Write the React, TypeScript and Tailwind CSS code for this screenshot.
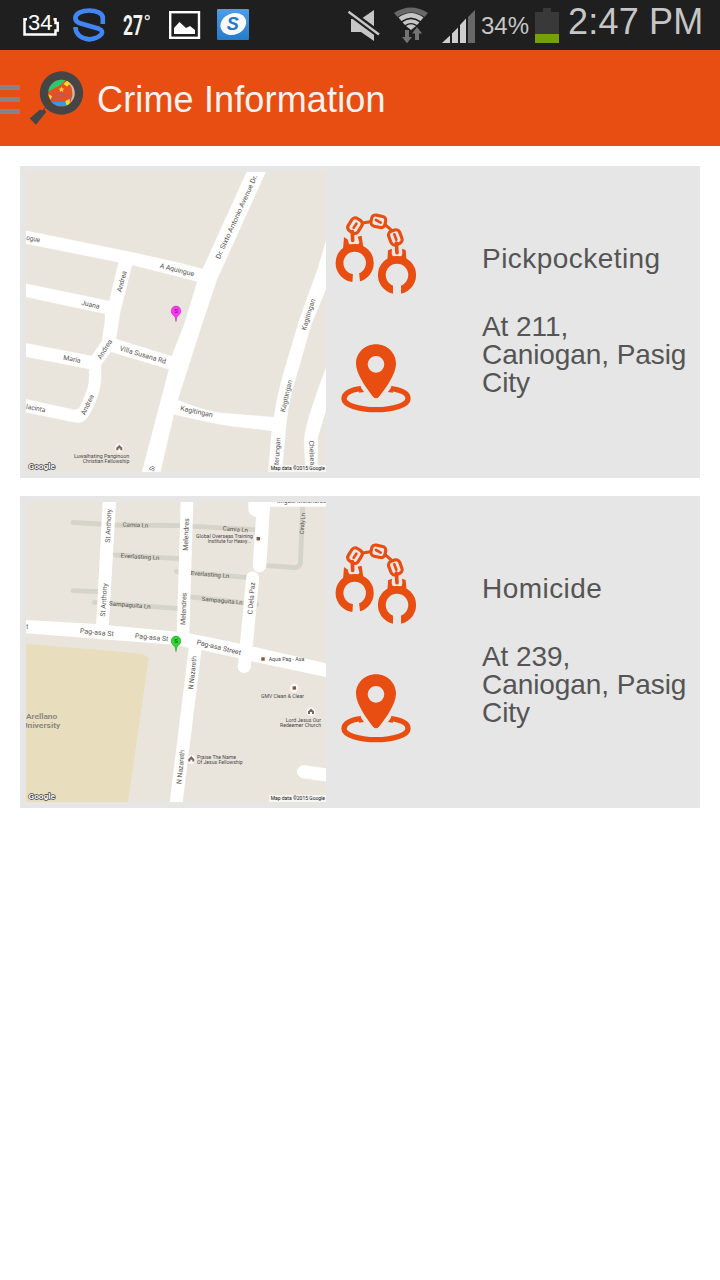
import React from "react";

type Line = [string, number, number, number, number];

function Labels({
  items,
  size = 6.9,
  fill = "#5a5552",
  weight = 400,
}: {
  items: Line[];
  size?: number;
  fill?: string;
  weight?: number;
}) {
  return (
    <g fontFamily="Roboto, sans-serif" fontSize={size} fontWeight={weight} fill={fill}>
      {items.map(([t, x1, y1, x2, y2], i) => {
        const len = Math.hypot(x2 - x1, y2 - y1);
        const angle = (Math.atan2(y2 - y1, x2 - x1) * 180) / Math.PI;
        return (
          <text
            key={i}
            transform={`translate(${x1} ${y1}) rotate(${angle})`}
            y={size * 0.34}
            textLength={len}
            lengthAdjust="spacingAndGlyphs"
          >
            {t}
          </text>
        );
      })}
    </g>
  );
}

function Marker({ x, y, color, edge }: { x: number; y: number; color: string; edge: string }) {
  return (
    <g>
      <path
        d={`M${x} ${y + 10}L${x - 0.9} ${y + 5.5}C${x - 2} ${y + 3.6} ${x - 4.8} ${y + 2.6} ${x - 4.8} ${y - 0.8}A4.8 4.8 0 0 1 ${x + 4.8} ${y - 0.8}C${x + 4.8} ${y + 2.6} ${x + 2} ${y + 3.6} ${x + 0.9} ${y + 5.5}Z`}
        fill={color}
        stroke={edge}
        strokeWidth="0.4"
      />
      <text x={x} y={y + 1.6} fontSize="6" fontWeight="bold" textAnchor="middle" fill={edge} fontFamily="Roboto, sans-serif">
        S
      </text>
    </g>
  );
}

function Place({ x, y, church }: { x: number; y: number; church?: boolean }) {
  return (
    <g>
      <circle cx={x} cy={y} r="4.4" fill="#fbfaf8" />
      {church ? (
        <path d={`M${x - 3} ${y + 2.2}v-2.6l1.5-1.2 1.5-1.6 1.5 1.6 1.5 1.2v2.6h-2v-1.8h-2v1.8z`} fill="#80665e" />
      ) : (
        <rect x={x - 1.7} y={y - 1.7} width="3.4" height="3.4" fill="#80574c" />
      )}
    </g>
  );
}

function Credits({ top }: { top: number }) {
  return (
    <g fontFamily="Roboto, sans-serif">
      <text
        x="28.5"
        y={top + 297.3}
        fontSize="8"
        fontWeight="bold"
        textLength="26.5"
        lengthAdjust="spacingAndGlyphs"
        fill="#fff"
        stroke="#3c3c3c"
        strokeWidth="1.3"
        paintOrder="stroke"
      >
        Google
      </text>
      <rect x="269" y={top + 293} width="57" height="7" fill="#f7f6f3" />
      <text x="270.7" y={top + 298.2} fontSize="5.6" textLength="54.3" lengthAdjust="spacingAndGlyphs" fill="#111">
        Map data ©2015 Google
      </text>
    </g>
  );
}

function CanioganWest() {
  return (
    <svg viewBox="26 172 300 300" className="block size-[300px] bg-[#e9e5dd]">
      <g fill="#fff" stroke="#fff" strokeWidth="0.3">
        <path d="M26 230.7L133 252.5L180 263L202.7 269L246.7 172H265.7L216.7 280L201.7 325L177.7 400L174 414L160.3 472H142L169 369.3L110.7 351.7L101 365V380C100 391 96 402 91.7 410C88 418 84 423 76.7 422.7L26 412.3V399.3L74 409.7C77 410 79 409 80 406.7C84 397 89 389 89 378L89.3 369L26 356.7V343.3L91.7 356L102 341L105 320V313.7L26 297V283.7L109.3 301L118.7 262.3L26 243.7ZM132 265L120 313L116 339L171.7 356.3L184 325L197.3 281.7L180 277Z" fillRule="evenodd" />
        <path d="M177.7 400Q205 411 220 412.7L274 417.3C277 397 281 382 285 368L299.3 320L318 268L326 241V289L311 325L297.7 371.7Q289 398 286.7 420L281.7 472H268.3L271.7 430.7L230 426Q205 422 174 414.3Z" />
        <path d="M326 368Q304 425 304 443L305.7 472H317L318 436.7L326 410Z" />
      </g>
      <Labels
        items={[
          ["ogue", 26.3, 237.5, 40, 240],
          ["A Aquingue", 160, 265.5, 194, 274],
          ["Andrea", 119, 292, 124.5, 271],
          ["Juana", 81.5, 302.5, 99.5, 306.5],
          ["Dr. Sixto Antonio Avenue Dr.", 217.5, 258.5, 255.5, 175],
          ["Kagitingan", 303.5, 330, 313, 299],
          ["Kagitingan", 282.5, 412, 290, 380],
          ["Kagitingan", 180.5, 408, 212.7, 415],
          ["Maria", 63.5, 357.5, 80.7, 360.5],
          ["Andrea", 99, 358.5, 110.5, 340],
          ["Villa Susana Rd", 120, 348, 166, 361.5],
          ["lacinta", 26.3, 406.4, 45.3, 410],
          ["Andrea", 82.8, 414.5, 92, 395],
          ["Si", 151.3, 471, 153, 466],
          ["terungan", 276.2, 465, 278.3, 437.5],
          ["Chelsea", 311.3, 440.5, 312.7, 465],
        ]}
      />
      <Place x={119.3} y={448} church />
      <Labels
        size={5.4}
        fill="#4a4644"
        items={[
          ["Luwalhating Panginoon", 74, 456, 129.3, 456],
          ["Christian Fellowship", 82.7, 461.3, 129.3, 461.3],
        ]}
      />
      <Marker x={176} y={311.7} color="#f93af4" edge="#a3129c" />
      <Credits top={172} />
    </svg>
  );
}

function CanioganEast() {
  return (
    <svg viewBox="26 502 300 300" className="block size-[300px] bg-[#e9e5dd]">
      <path d="M26 644L108 650.5L143 654L148.7 658L128 802H26Z" fill="#e8debd" />
      <g fill="none" stroke="#d4d4c8" strokeWidth="4.8" strokeLinecap="round" strokeLinejoin="round">
        <path d="M73 522.5L101 524M116 525L180 525.7L255 529.7M115 555L180 558.7M176.5 571.7L246 577.3M73 590.7L98 591.7M94.3 602.3L176.7 608.3M191.7 597L257 604.3" />
        <path d="M302.7 506L300.5 562Q300 567.5 295 567.5L267 565.7" />
      </g>
      <g fill="#fff">
        <path d="M102.7 502H116L108.7 627H96Z" />
        <path d="M26 620L96 624L176.7 631.7L190 633.5L241.7 644L326 663.3V677L251 661L202 650L188 647.7L176.7 645L26 633.3Z" />
        <path d="M180.7 502H193.3L189.3 635H176.7Z" />
        <path d="M189 646H202L182.7 802H169.7Z" />
        <path d="M248.3 502H326V506.7H270L266.3 566A6.7 6.7 0 0 1 252.8 565L256 517Q248.3 515 248.3 509Z" />
      </g>
      <path d="M252.7 578L244.3 666.5M303.5 771.7L330 775.5" stroke="#fff" strokeWidth="13" strokeLinecap="round" fill="none" />
      <Labels
        items={[
          ["St Anthony", 107.7, 542.7, 109, 509],
          ["St Anthony", 102.7, 616.7, 105, 583.3],
          ["Pag-asa St", 80, 630.7, 113.7, 634],
          ["Pag-asa St", 135, 635.7, 168.3, 639],
          ["t", 26.3, 627, 28.3, 627],
          ["Melendres", 185.3, 550.7, 186.7, 518.3],
          ["Melendres", 183, 625, 184.3, 592.7],
          ["C Dela Paz", 250, 614.3, 252.7, 582.3],
          ["Pag-asa Street", 196.7, 642, 241, 652.7],
          ["N Nazareth", 190.7, 689.3, 194.3, 656],
          ["N Nazareth", 179, 784, 182.3, 750],
          ["Miguel Melendres", 277, 500.7, 326, 500.7],
        ]}
      />
      <Labels
        size={6}
        items={[
          ["Camia Ln", 122.7, 524.5, 148.3, 525.5],
          ["Everlasting Ln", 120.7, 555.5, 159.3, 558],
          ["Sampaguita Ln", 109, 603.3, 150.7, 606.7],
          ["Camia Ln", 222.7, 528.3, 248, 530.3],
          ["Everlasting Ln", 190.7, 573, 229.3, 576],
          ["Sampaguita Ln", 201.7, 598.7, 242.7, 602.7],
          ["Cindy Ln", 301.7, 534, 303.3, 513],
        ]}
      />
      <Place x={258.3} y={538.7} />
      <Place x={263} y={659} />
      <Place x={294.3} y={688} />
      <Place x={311} y={711.7} church />
      <Place x={191.3} y={759.3} church />
      <Labels
        size={5.4}
        fill="#4a4644"
        items={[
          ["Global Overseas Training", 196, 536.3, 253, 536.3],
          ["Institute for Heavy...", 207.7, 541.5, 251, 541.5],
          ["Aqua Pag - Asa", 268.7, 659.2, 304.3, 659.2],
          ["GMV Clean & Clear", 261, 696, 304, 696],
          ["Lord Jesus Our", 285.7, 720, 321, 720],
          ["Redeemer Church", 280, 725.2, 321, 725.2],
          ["Praise The Name", 197, 756.7, 236, 756.7],
          ["Of Jesus Fellowship", 197, 761.9, 242.7, 761.9],
        ]}
      />
      <Labels
        size={7.6}
        fill="#85857f"
        weight={600}
        items={[
          ["Arellano", 26, 716.7, 57.3, 716.7],
          ["University", 22, 725.3, 60.3, 725.3],
        ]}
      />
      <Marker x={176} y={641.7} color="#35d33a" edge="#0b7a14" />
      <Credits top={502} />
    </svg>
  );
}

function Handcuffs() {
  return (
    <svg viewBox="30 40 246 246" className="block size-[82px]">
      <g transform="translate(89 190)">
        <path d="M-35-40L-32-78L-20-70L-19-62Q-16-53-6-53H3Q13-54 14-62L9-79L21-82L27-40Z" fill="#e84e11" />
        <circle r="45.5" fill="none" stroke="#e84e11" strokeWidth="23.5" />
        <path d="M-5 29H13L17 62H-7Z" fill="#e6e6e6" />
      </g>
      <g transform="translate(216 226)">
        <path d="M-29-40L-27-74L-15-79L-16-66Q-14-53-4-53H5Q15-53 16-66L15-79L26-75L29-40Z" fill="#e84e11" />
        <circle r="45.5" fill="none" stroke="#e84e11" strokeWidth="23.5" />
        <path d="M-12 29H12V62H-12Z" fill="#e6e6e6" />
      </g>
      <g fill="none" stroke="#e84e11" strokeLinecap="round">
        <g strokeWidth="9.5">
          <rect x="-22" y="-17.5" width="44" height="35" rx="12" transform="translate(90 78) rotate(-58)" />
          <rect x="-21.5" y="-17" width="43" height="34" rx="12" transform="translate(160 65) rotate(12)" />
          <rect x="-21.5" y="-17.5" width="43" height="35" rx="12" transform="translate(211 113) rotate(70)" />
        </g>
        <path d="M82 96L83 122M214 130L216 159" strokeWidth="11" />
        <path d="M112 70L136 66M184 78L200 92" strokeWidth="9" />
        <path d="M86 84L94 72M153 61L167 69M208 104L214 120" strokeWidth="8" />
      </g>
    </svg>
  );
}

function LocationPin() {
  return (
    <svg viewBox="48 431 210 207" className="block h-[69px] w-[70px]">
      <path
        d="M108 565C78 568 57 579 57 595C57 613 100 628 153 628S249 613 249 595C249 579 229 569 198 565"
        fill="none"
        stroke="#e84e11"
        strokeWidth="16"
      />
      <path d="M104 556L117 575L102 577ZM202 556L189 575L204 577Z" fill="#e84e11" />
      <path
        fillRule="evenodd"
        fill="#e84e11"
        d="M153 432C120 432 93 457 93 490C93 520 124 563 144 589Q153 599 162 589C183 563 213 520 213 490C213 457 186 432 153 432ZM153 467A25 25 0 1 1 153 517A25 25 0 1 1 153 467Z"
      />
    </svg>
  );
}

function CrimeCard({ map, crime, address }: { map: React.ReactNode; crime: string; address: string }) {
  return (
    <article className="flex h-[312px] bg-[#e6e6e6] p-[6px]">
      {map}
      <div className="flex w-[156px] shrink-0 flex-col pl-[9px] pt-[41px]">
        <Handcuffs />
        <div className="pl-[6px] pt-[49px]">
          <LocationPin />
        </div>
      </div>
      <div className="flex w-[212px] flex-col text-[28px] leading-[28px] text-[#555555]">
        <h2 className="mt-[73px] tracking-[0.45px]">{crime}</h2>
        <p className="mt-[40px] tracking-[-0.08px]">{address}</p>
      </div>
    </article>
  );
}

function StatusBar() {
  return (
    <div className="flex h-[50px] bg-[#1f1f1f] text-[#c6c6c6]">
      <svg viewBox="0 0 260 50" className="h-[50px] w-[260px] shrink-0">
        <path d="M27 19.2H24.5V34.5H55.5V30.5H57.7V23H55.5V19.2H53.5" fill="none" stroke="#fff" strokeWidth="2.5" />
        <text x="28" y="30" fontSize="22" fill="#fff" fontFamily="Liberation Sans, sans-serif" textLength="24.5">34</text>
        <path
          d="M102.8 24V18C102.8 13 96 10.5 89.3 10.5S75.4 13 75.4 18C75.4 21 77 22.3 80 23.2L99 28.8C102 30 103 32 101.3 34.3C98.5 37.5 94 39 89.3 39.4C82 38.6 75.6 35 75.4 27"
          fill="none"
          stroke="#4285f5"
          strokeWidth="4.6"
        />
        <text x="123" y="35" fontSize="27" fontWeight="bold" fill="#f2f2f2" fontFamily="Roboto, sans-serif" textLength="20" lengthAdjust="spacingAndGlyphs">27</text>
        <circle cx="147.3" cy="17.5" r="2" fill="none" stroke="#ddd" strokeWidth="1.3" />
        <rect x="170.2" y="12.2" width="28.8" height="25.6" fill="none" stroke="#fff" strokeWidth="2.4" />
        <path d="M174 34V28L179.5 22L186 28L190 26L195 30V34Z" fill="#fff" />
        <defs>
          <linearGradient id="tile" x1="0" x2="0" y1="0" y2="1">
            <stop stopColor="#519ce4" />
            <stop offset="1" stopColor="#247bcc" />
          </linearGradient>
        </defs>
        <rect x="217" y="9" width="32" height="31" rx="1" fill="url(#tile)" />
        <ellipse cx="233.3" cy="24" rx="13.2" ry="10.6" transform="rotate(-22 233.3 24)" fill="#f7f9fb" />
        <text x="232.8" y="30.2" fontSize="18" fontWeight="bold" fontStyle="italic" textAnchor="middle" fill="#2878c3" fontFamily="Liberation Sans, sans-serif">S</text>
      </svg>
      <svg viewBox="340 0 136 50" className="ml-[80px] h-[50px] w-[136px] shrink-0">
        <path d="M351 19H361L374 10V41L361 32H351Z" fill="#c6c6c6" />
        <path d="M347 10.5L380 35" stroke="#1f1f1f" strokeWidth="7" />
        <path d="M348.5 11.8L379 34.5" stroke="#c6c6c6" strokeWidth="2.4" />
        <path d="M394 13Q411 2 428 13L424.5 17Q411 8 397.5 17Z" fill="#686868" />
        <path d="M398.5 17.5Q411 8.5 423.5 17.5L420.5 21Q411 14 401.5 21ZM402.5 22.3Q411 16 419.5 22.3L417 25Q411 21 405 25ZM406 26Q411 22.5 416 26L411 30Z" fill="#c6c6c6" />
        <path d="M405 30H409V37H412L407 43.2L402 37H405ZM415 40V33.5H412L417 27L422 33.5H419V40Z" fill="#737373" />
        <path d="M442 43L450 35.5V43ZM452 33.5L458 27.5V43H452ZM460 25L466 18.5V43H460Z" fill="#cecece" />
        <path d="M468 17L475 10V43H468Z" fill="#686868" />
      </svg>
      <span className="w-[59px] pl-[5px] pt-[12px] text-[24px] leading-7">34%</span>
      <svg viewBox="0 0 24 50" className="h-[50px] w-[24px] shrink-0">
        <path d="M0 12H8V8H16V12H24V34H0Z" fill="#393939" />
        <path d="M0 34H24V43H0Z" fill="#73a00b" />
      </svg>
      <span className="whitespace-nowrap pl-[9px] pt-[1px] text-[36px] leading-[42px] tracking-[0.2px]">2:47 PM</span>
    </div>
  );
}

function Header() {
  return (
    <header className="flex h-[96px] items-center bg-[#e84e11]">
      <div className="flex w-5 flex-col gap-[7px] pt-[3px]">
        <i className="h-[5px] bg-[#858585]" />
        <i className="h-[5px] bg-[#858585]" />
        <i className="h-[5px] bg-[#858585]" />
      </div>
      <svg viewBox="88 210 166 168" className="ml-[9px] h-[56px] w-[55px]">
        <path d="M145 316L134 329L140 336L109 375L90 356L121 329L128 332L140 318Z" fill="#454545" />
        <circle cx="186" cy="279" r="65.5" fill="#454545" />
        <clipPath id="lens"><circle cx="186" cy="279" r="40" /></clipPath>
        <g clipPath="url(#lens)">
          <path d="M140 230H235V325H140Z" fill="#e9501f" />
          <path d="M140 230H208L183 255L148 274H140Z" fill="#29c96f" />
          <path d="M192 252L207 238L215 250L202 259Z" fill="#f4df20" />
          <path d="M207 247L228 260V315H211L219 285L217 264Z" fill="#c5b9b0" />
          <path d="M145 302Q180 310 203 303L201 322H157Z" fill="#3597ed" />
          <path d="M198 303L211 297V315L201 317ZM145 281L158 289L153 299Z" fill="#f3dc2b" />
          <path d="M158 290Q186 276 215 290M159 296Q186 285 213 296" fill="none" stroke="#a2626a" strokeWidth="2.4" />
          <path d="M186 259L189 265L195 266L190 270L192 276L186 273L180 276L182 270L177 266L183 265Z" fill="#f2d237" />
        </g>
      </svg>
      <h1 className="ml-[13px] mt-[4px] text-[36px] leading-[42px] tracking-[0.15px] text-[#f5f2f0]">Crime Information</h1>
    </header>
  );
}

export default function App() {
  return (
    <div className="min-h-[1280px] w-[720px] bg-white font-['Liberation_Sans',sans-serif]">
      <StatusBar />
      <Header />
      <main className="flex flex-col gap-[18px] p-5">
        <CrimeCard map={<CanioganWest />} crime="Pickpocketing" address="At 211, Caniogan, Pasig City" />
        <CrimeCard map={<CanioganEast />} crime="Homicide" address="At 239, Caniogan, Pasig City" />
      </main>
    </div>
  );
}
